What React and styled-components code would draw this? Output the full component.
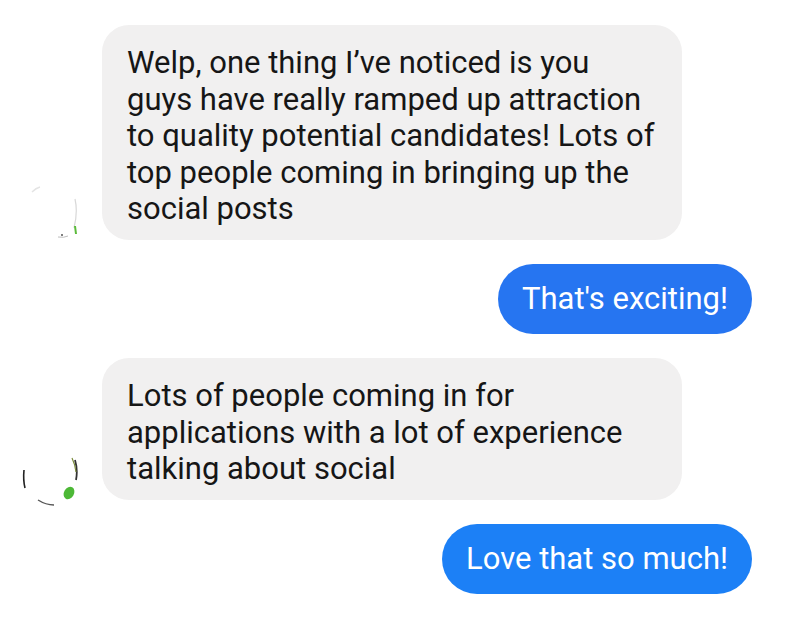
import React from "react";
import styled, { createGlobalStyle } from "styled-components";

const Global = createGlobalStyle`
  html, body { margin: 0; padding: 0; background: #ffffff; }
  body { font-family: Roboto, "Noto Sans", "Liberation Sans", sans-serif; }
`;

const Thread = styled.div`
  width: 800px;
  height: 622px;
  box-sizing: border-box;
  padding: 25px 48px 0 20px;
  display: flex;
  flex-direction: column;
  gap: 24px;
  overflow: hidden;
`;

const Row = styled.div`
  display: flex;
  align-items: flex-end;
  justify-content: ${(p) => (p.$out ? "flex-end" : "flex-start")};
  gap: 24px;
`;

const AvatarBox = styled.div`
  width: 58px;
  height: 58px;
  flex: none;
  margin-bottom: ${(p) => p.$mb || 0}px;
`;

const Bubble = styled.div`
  box-sizing: border-box;
  font-size: 31px;
  line-height: 36.5px;
  letter-spacing: 0;
  background: ${(p) => (p.$out ? p.$bg || "#2475f2" : "#f1f0f0")};
  color: ${(p) => (p.$out ? "#ffffff" : "#161616")};
  border-radius: ${(p) => (p.$out ? "36px" : "27px")};
  padding: ${(p) => (p.$out ? "17px 24px" : "20px 8px 12px 25px")};
  width: ${(p) => (p.$out ? "auto" : "580px")};
  white-space: nowrap;
`;

const Line = styled.span`
  display: block;
`;

const Avatar = ({ variant }) => (
  <svg width="58" height="58" viewBox="0 0 58 58">
    {variant === 1 ? (
      <>
        <path d="M12 10 Q16 6 20 5" stroke="#e4e4e4" strokeWidth="1.5" fill="none" />
        <path d="M55 17 Q58 30 54 46" stroke="#d8d8d8" strokeWidth="1.2" fill="none" />
        <path d="M55 44 L56 52" stroke="#5cbb3c" strokeWidth="2" fill="none" />
        <path d="M38 55 Q44 56 48 54" stroke="#bdbdbd" strokeWidth="1" fill="none" />
        <circle cx="42" cy="53" r="1" fill="#555" />
      </>
    ) : (
      <>
        <path d="M4 20 Q3 30 5 38" stroke="#222" strokeWidth="1.6" fill="none" />
        <path d="M18 50 Q26 55 34 55" stroke="#555" strokeWidth="1.4" fill="none" />
        <path d="M55 10 Q58 20 56 30" stroke="#333" strokeWidth="1.8" fill="none" />
        <path d="M52 8 Q55 14 56 22" stroke="#7a8a3a" strokeWidth="1.2" fill="none" />
        <ellipse cx="49" cy="43" rx="5" ry="6.5" transform="rotate(30 49 43)" fill="#4cb836" />
      </>
    )}
  </svg>
);

const incoming1 = [
  "Welp, one thing I’ve noticed is you",
  "guys have really ramped up attraction",
  "to quality potential candidates! Lots of",
  "top people coming in bringing up the",
  "social posts",
];

const incoming2 = [
  "Lots of people coming in for",
  "applications with a lot of experience",
  "talking about social",
];

export default function App() {
  return (
    <>
      <Global />
      <Thread>
        <Row>
          <AvatarBox $mb={0}>
            <Avatar variant={1} />
          </AvatarBox>
          <Bubble>
            {incoming1.map((l) => (
              <Line key={l}>{l}</Line>
            ))}
          </Bubble>
        </Row>
        <Row $out>
          <Bubble $out $bg="#2675f1">That's exciting!</Bubble>
        </Row>
        <Row>
          <AvatarBox $mb={-8}>
            <Avatar variant={2} />
          </AvatarBox>
          <Bubble>
            {incoming2.map((l) => (
              <Line key={l}>{l}</Line>
            ))}
          </Bubble>
        </Row>
        <Row $out>
          <Bubble $out $bg="#1c80f6">Love that so much!</Bubble>
        </Row>
      </Thread>
    </>
  );
}
